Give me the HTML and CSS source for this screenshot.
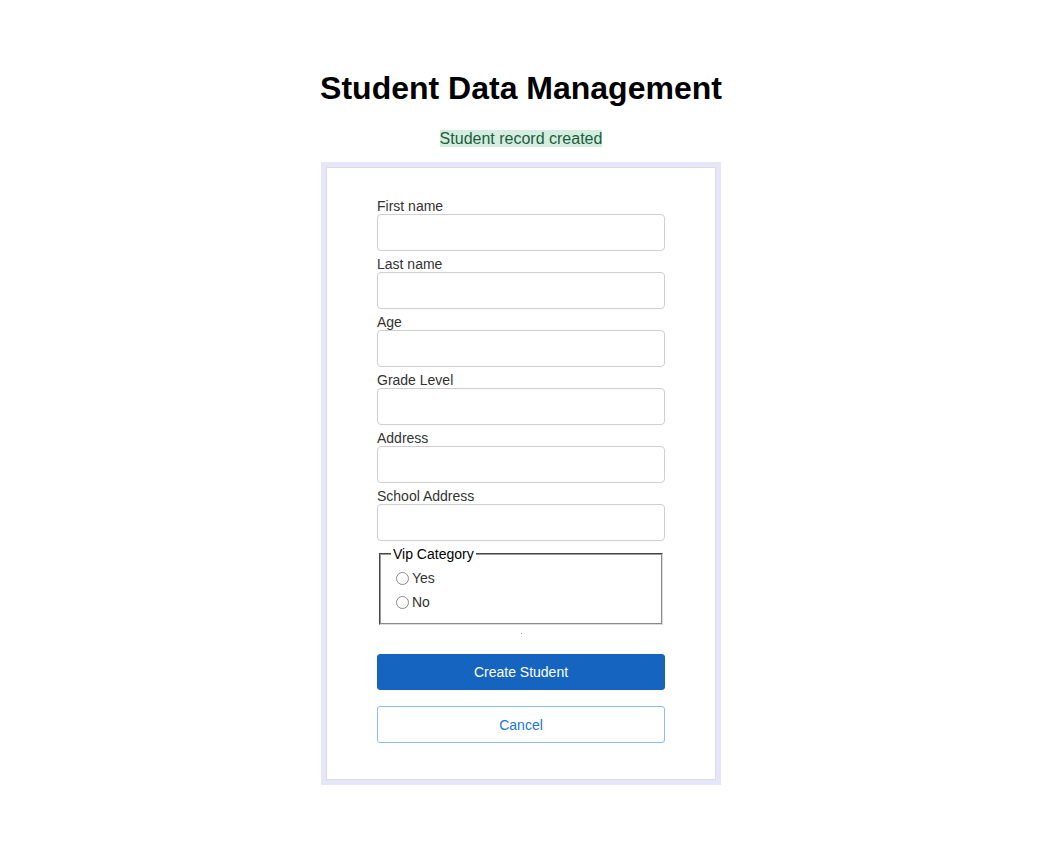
FILE: index.html
```html
<!DOCTYPE html>
<html>
<head>
<meta charset="utf-8">
<title>Student Data Management</title>
<link rel="stylesheet" href="styles.css">
</head>
<body>
<main class="page">
  <h1 class="title">Student Data Management</h1>
  <p class="status"><span class="status-text">Student record created</span></p>
  <div class="card">
    <form class="form">
      <div class="field"><label class="label">First name</label><input class="input" type="text"></div>
      <div class="field"><label class="label">Last name</label><input class="input" type="text"></div>
      <div class="field"><label class="label">Age</label><input class="input" type="text"></div>
      <div class="field"><label class="label">Grade Level</label><input class="input" type="text"></div>
      <div class="field"><label class="label">Address</label><input class="input" type="text"></div>
      <div class="field"><label class="label">School Address</label><input class="input" type="text"></div>
      <fieldset class="group">
        <legend class="legend">Vip Category</legend>
        <label class="option"><input class="radio" type="radio" name="vip">Yes</label>
        <label class="option"><input class="radio" type="radio" name="vip">No</label>
      </fieldset>
      <div class="note"><span class="note-dot"></span></div>
      <button class="btn btn-primary" type="button">Create Student</button>
      <button class="btn btn-outline" type="button">Cancel</button>
    </form>
  </div>
</main>
</body>
</html>
```
FILE: styles.css
```css
html, body {
  margin: 0;
  padding: 0;
  background: #ffffff;
}
body {
  font-family: "Liberation Sans", Arial, sans-serif;
}
.page {
  display: flex;
  flex-direction: column;
  align-items: center;
  padding-top: 70px;
}
.title {
  margin: 0 0 22px;
  font-size: 32px;
  line-height: 37px;
  font-weight: bold;
  color: #000;
}
.status {
  margin: 0 0 13px;
  font-size: 16px;
  line-height: 20px;
}
.status-text {
  background: #d4ede0;
  color: #1b5e3b;
}
.card {
  width: 390px;
  border: 5px solid #e6e6fa;
}
.form {
  display: flex;
  flex-direction: column;
  border: 1px solid #dcdcdc;
  padding: 30px 50px 36px;
}
.field {
  display: flex;
  flex-direction: column;
  margin-bottom: 5px;
}
.label {
  font-size: 14px;
  line-height: 16px;
  color: #333;
}
.input {
  box-sizing: border-box;
  height: 37px;
  width: 100%;
  margin: 0;
  border: 1px solid #cfcfcf;
  border-radius: 4px;
  background: #fff;
}
.group {
  margin: 0 2px;
  padding: 4px 10px 9px;
  border-width: 2px;
  border-style: groove;
  border-color: #9a9a9a #dcdcdc #dcdcdc #9a9a9a;
  display: flex;
  flex-direction: column;
}
.legend {
  font-size: 14px;
  line-height: 16px;
  padding: 0 2px;
  color: #000;
}
.option {
  display: flex;
  align-items: center;
  height: 24px;
  font-size: 14px;
  color: #333;
}
.radio {
  appearance: none;
  -webkit-appearance: none;
  box-sizing: border-box;
  margin: 0 3px 0 5px;
  width: 13px;
  height: 13px;
  border: 1px solid #8a8a8a;
  border-radius: 50%;
  background: #fff;
}
.note {
  height: 29px;
  display: flex;
  justify-content: center;
  padding-top: 8px;
  box-sizing: border-box;
}
.note-dot {
  width: 1px;
  height: 1px;
  background: #999;
}
.btn {
  box-sizing: border-box;
  width: 100%;
  font-family: "Liberation Sans", Arial, sans-serif;
  font-size: 14px;
  border-radius: 3px;
  cursor: pointer;
}
.btn-primary {
  height: 36px;
  background: #1565c0;
  color: #fff;
  border: 1px solid #1565c0;
  margin-bottom: 16px;
}
.btn-outline {
  height: 37px;
  background: #fff;
  color: #1976d2;
  border: 1px solid #8cbcec;
}
```
